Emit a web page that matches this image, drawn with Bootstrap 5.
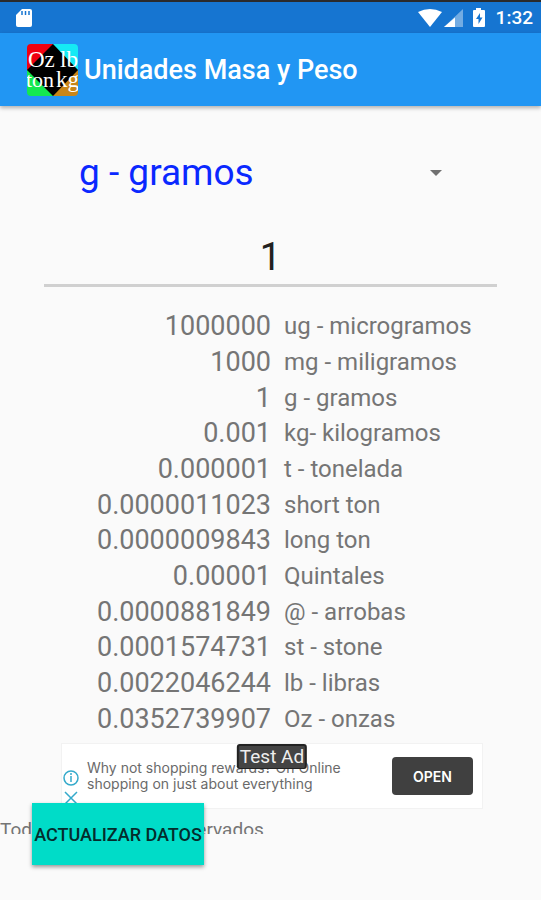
<!DOCTYPE html>
<html lang="es">
<head>
<meta charset="utf-8">
<meta name="viewport" content="width=device-width, initial-scale=1">
<title>Unidades Masa y Peso</title>
<link href="https://cdn.jsdelivr.net/npm/bootstrap@5.3.0/dist/css/bootstrap.min.css" rel="stylesheet">
<style>
body{font-family:Roboto,sans-serif;background:#fafafa;color:#757575}
.status-bar{height:33px;background:#1675d1;border-top:2px solid #2a2a2c;color:#fff;font-size:19px;font-weight:500;line-height:30px}
.app-bar{height:73px;background:#2196f3;box-shadow:0 2px 4px rgba(0,0,0,.3);color:#fff;padding:0 27px;gap:6px}
.app-title{font-size:27px;line-height:36px;font-weight:500}
.converter{padding:35px 44px 22px}
.unit-pick{height:64px;padding:0 48px 0 35px;font-size:37px;color:#0a28ff;background:url("data:image/svg+xml,%3Csvg xmlns='http://www.w3.org/2000/svg' viewBox='0 0 12 6'%3E%3Cpath d='M0 0h12L6 6z' fill='%23707070'/%3E%3C/svg%3E") no-repeat right 55px center/12px 6px;appearance:none}
.amount{height:82px;font-size:38px;color:#212121;border-bottom:3px solid #d0d0d0!important}
.results{min-height:428px}
.results td{padding:0 13px 0 0;width:52.5%;text-align:right;font-size:27px;line-height:35px}
.results th{padding:0;font-size:24px;line-height:35px;font-weight:400}
.ad-box{margin:7px 59px 0 62px;height:64px;background:#fff;outline:1px solid #f2f2f2;font-family:Inter,sans-serif;padding:0 9px 0 1px}
.ad-marks{width:16px;padding-top:23px}
.ad-copy{font-size:14px;line-height:16px;color:#6a6a6a}
.ad-open{width:81px;height:38px;background:#404040;color:#fff;border-radius:4px;font-size:14px;font-weight:600}
.ad-tag{font-family:Roboto,sans-serif;font-size:19px;line-height:22px;color:#eee;background:#444;border:2px solid #222;border-bottom-width:1px;padding:0 1px;border-radius:3px}
.page-end{display:grid;justify-items:start;padding-bottom:35px}
.page-end>*{grid-area:1/1}
.rights{margin-top:12px;height:14px;font-size:19px;line-height:20px}
.refresh{margin:-5px 0 0 32px;width:172px;height:62px;background:#00dcc8;color:#042c2c;font-size:18px;font-weight:500;box-shadow:0 2px 4px rgba(0,0,0,.4)}
</style>
<script src="https://cdn.jsdelivr.net/npm/bootstrap@5.3.0/dist/js/bootstrap.bundle.min.js"></script>
</head>
<body>
<div class="status-bar d-flex align-items-center justify-content-between ps-3 pe-2">
  <svg width="16" height="20" viewBox="0 0 16 20" aria-hidden="true"><path d="M6 1h8q2 0 2 2v14q0 2-2 2H2q-2 0-2-2V7z" fill="#fff"/><path d="M6 3v4M9.500 3v4M13 3v4" stroke="#1675d1" stroke-width="1.500"/></svg>
  <div class="d-flex align-items-center">
    <svg width="70" height="22" viewBox="0 0 70 22" aria-hidden="true"><path d="M0 5Q12-1 24 5L12 20z" fill="#fff"/><path d="M45 2v18H26z" fill="#fff" opacity=".4"/><path d="M37 10.500V20H26z" fill="#fff"/><path d="M58 1h5v2h3q1 0 1 1v15q0 1-1 1H56q-1 0-1-1V4q0-1 1-1h2z" fill="#fff"/><path d="M62 6l-4 6h2.500v5l4-6.500H62z" fill="#1675d1"/></svg>
    <span class="ms-2">1:32</span>
  </div>
</div>
<header class="app-bar d-flex align-items-center">
  <svg class="flex-shrink-0" width="51" height="52" viewBox="0 0 51 52" role="img" aria-label="Oz lb ton kg"><defs><clipPath id="tile"><rect width="51" height="52" rx="4"/></clipPath></defs><g clip-path="url(#tile)"><path d="M0 0h26v26H0z" fill="#f00010"/><path d="M26 0h25v26H26z" fill="#15eaf4"/><path d="M0 26h26v26H0z" fill="#14e84f"/><path d="M26 26h25v26H26z" fill="#c98618"/><path d="M26 0l25 26-25 26L0 26z"/><g font-family="Liberation Serif, serif" font-size="23" fill="#fff"><text x="1" y="23">Oz</text><text x="33" y="23">lb</text><text x="-1" y="43" font-size="22">ton</text><text x="29" y="43">kg</text></g></g></svg>
  <h1 class="app-title m-0">Unidades Masa y Peso</h1>
</header>
<main>
  <form class="converter">
    <label class="visually-hidden" for="unit">Unidad</label>
    <select id="unit" class="unit-pick d-block w-100 border-0"><option>g - gramos</option><option>kg- kilogramos</option></select>
    <label class="visually-hidden" for="amount">Cantidad</label>
    <input id="amount" class="amount d-block w-100 border-0 bg-transparent text-center p-0 pt-4" type="text" inputmode="decimal" value="1">
  </form>
  <table class="results w-100">
    <tbody>
    <tr><td>1000000</td><th scope="row">ug - microgramos</th></tr>
    <tr><td>1000</td><th scope="row">mg - miligramos</th></tr>
    <tr><td>1</td><th scope="row">g - gramos</th></tr>
    <tr><td>0.001</td><th scope="row">kg- kilogramos</th></tr>
    <tr><td>0.000001</td><th scope="row">t - tonelada</th></tr>
    <tr><td>0.0000011023</td><th scope="row">short ton</th></tr>
    <tr><td>0.0000009843</td><th scope="row">long ton</th></tr>
    <tr><td>0.00001</td><th scope="row">Quintales</th></tr>
    <tr><td>0.0000881849</td><th scope="row">@ - arrobas</th></tr>
    <tr><td>0.0001574731</td><th scope="row">st - stone</th></tr>
    <tr><td>0.0022046244</td><th scope="row">lb - libras</th></tr>
    <tr><td>0.0352739907</td><th scope="row">Oz - onzas</th></tr>
    </tbody>
  </table>
  <aside class="ad-box position-relative d-flex align-items-center">
    <div class="ad-marks align-self-start"><svg class="d-block" width="16" height="40" viewBox="0 0 16 40" fill="none" stroke="#35aacb" stroke-width="1.500" aria-hidden="true"><circle cx="8" cy="11" r="7"/><path d="M8 9v6M8 6v2M2 25l12 12M14 25L2 37"/></svg></div>
    <div class="ad-copy flex-grow-1 ps-2 text-nowrap">Why not shopping rewards? On Online<br>shopping on just about everything</div>
    <button type="button" class="ad-open border-0 p-0 flex-shrink-0">OPEN</button>
    <span class="ad-tag position-absolute top-0 start-50 translate-middle-x text-nowrap">Test Ad</span>
  </aside>
  <footer class="page-end">
    <div class="rights overflow-hidden text-nowrap">Todos los derechos reservados</div>
    <button type="button" class="refresh position-relative border-0 p-0 text-nowrap">ACTUALIZAR DATOS</button>
  </footer>
</main>
</body>
</html>
